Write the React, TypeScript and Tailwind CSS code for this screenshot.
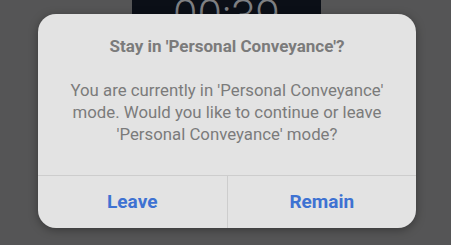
import React from 'react';

export default function App() {
  return (
    <div
      className="relative w-[451px] h-[245px] overflow-hidden bg-[#555556]"
      style={{ fontFamily: 'Roboto, "Liberation Sans", sans-serif' }}
    >
      {/* Timer behind the dialog */}
      <div className="flex pl-[132px]">
        <div className="w-[189px] h-[14px] overflow-hidden bg-[#0b0f17] flex justify-center">
          <span className="block h-[14px] text-[44px] leading-[14px] font-light text-[#7e7f82] pt-[9px]">00:39</span>
        </div>
      </div>

      {/* Dialog */}
      <div className="absolute left-[38px] top-[14px] w-[378px] h-[214px] rounded-[18px] bg-[#e3e3e3] shadow-[0_2px_10px_rgba(0,0,0,0.35)] flex flex-col overflow-hidden">
        <div className="flex-1 flex flex-col items-center px-3 pt-[22px]">
          <h2 className="text-[17px] leading-[20px] font-bold text-[#7b7b7b]">
            Stay in 'Personal Conveyance'?
          </h2>
          <p className="mt-[23px] text-[16.8px] leading-[22px] text-[#7b7b7b] text-center">
            You are currently in 'Personal Conveyance'
            <br />
            mode. Would you like to continue or leave
            <br />
            'Personal Conveyance' mode?
          </p>
        </div>
        <div className="h-[53px] flex border-t border-[#cdcdcd]">
          <button className="flex-1 flex items-center justify-center text-[19px] font-bold text-[#3e72d2] border-r border-[#cdcdcd]">
            Leave
          </button>
          <button className="flex-1 flex items-center justify-center text-[19px] font-bold text-[#3e72d2]">
            Remain
          </button>
        </div>
      </div>
    </div>
  );
}
